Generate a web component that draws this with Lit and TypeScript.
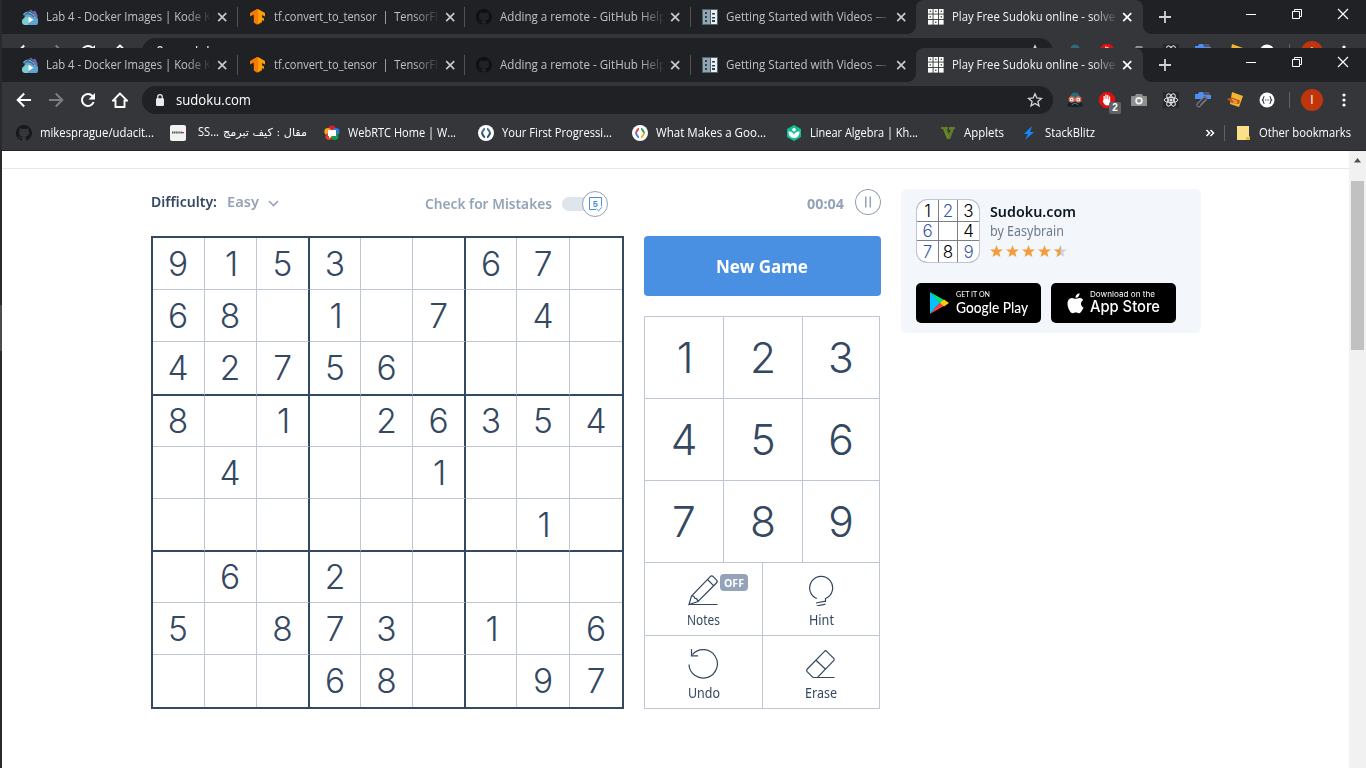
import { LitElement, html, css, svg, nothing } from "lit";
import { customElement, property } from "lit/decorators.js";
import { styleMap } from "lit/directives/style-map.js";
import { classMap } from "lit/directives/class-map.js";

const icon = (body: unknown, size = 16, box = "0 0 16 16") =>
  html`<svg width=${size} height=${size} viewBox=${box} fill="none">${body}</svg>`;

const github = (color: string) => icon(svg`<path fill=${color} d="M8 0a8 8 0 0 0-2.6 15.6c.4.1.6-.2.6-.4v-1.6c-2.2.5-2.7-.9-2.7-.9-.4-.9-.9-1.2-.9-1.2-.7-.5.1-.5.1-.5.8.1 1.200.8 1.200.8.7 1.300 1.900.9 2.400.7.1-.5.3-.9.5-1.100-1.800-.2-3.600-.9-3.600-4 0-.9.3-1.600.8-2.100-.1-.2-.4-1 .1-2.100 0 0 .7-.2 2.200.8a7.500 7.500 0 0 1 4 0c1.500-1 2.200-.8 2.200-.8.4 1.100.2 1.900.1 2.100.5.6.8 1.300.8 2.100 0 3.100-1.900 3.700-3.700 4 .3.300.6.800.6 1.500v2.200c0 .2.100.5.600.4A8 8 0 0 0 8 0z"/>`);

const favDocker = icon(svg`<path fill="#6f6aa8" d="M5 3.500L9 .5l2 2 2-1 2.500 4.500v4H4z"/><path fill="#5fa3cf" d="M1 5.500c2-3 5-3.500 8-2.500l4 4 3 3v4l-1 2H3L0 14v-3l3-3z"/><path fill="#7ccbd0" d="M0 11.500l4-4 3 2-1 6.500H2l-2-2z"/><path stroke="#24384f" stroke-width=".7" d="M1.500 7l3.500-2.500 4 1 3 2.500M5 3.500l3-1.500 3 2.500"/><path fill="#fff" d="M6.500 7.500v6.500l5-3.200z"/>`);
const favTf = icon(svg`<path fill="#f57c00" d="M7 0L0 4v3.600l3.800-2V13.500L7 15.500z"/><path fill="#ff9d00" d="M8 0l7 4v3.600l-3-1.700v2.300l2 1.200v2.600l-2-1.100V13l-4 2.500z"/><path fill="#f57c00" d="M6.500 .3L8 0v15.500l-1.500-.2z"/>`);
const favVideos = icon(svg`<path fill="#53636e" d="M0 0h16v16H0z"/><path fill="#8fa6b5" d="M1 1h7v14H1z"/><path fill="#e8eef2" d="M9 1h6v14H9z"/><path fill="#33434e" d="M3 3h2v2H3zM3 7h2v2H3zM3 11h2v2H3zM10 4h3v1.500h-3zM10 8h3v1.500h-3zM10 11h3v2h-3z"/>`);
const favSudoku = icon(svg`${[0, 5.5, 11].map((y, r) => [0, 5.5, 11].map((x, c) => svg`<rect x=${x} y=${y} width="4.600" height="4.600" fill="#fff"/>${(r === 0 && c !== 2) || (r === 0 && c === 2) || (r === 1 && c !== 1) || (r === 2 && c === 1) ? svg`<rect x=${x + 1.6} y=${y + 1.6} width="1.400" height="1.400" fill="#4b4c50"/>` : nothing}`))}`);

interface Tab { title: string; fit: number; width: number; icon: unknown; active?: boolean; }
const tabs: Tab[] = [
  { title: "Lab 4 - Docker Images | Kode K", fit: 165, width: 228, icon: favDocker },
  { title: "tf.convert_to_tensor  |  TensorFl", fit: 164, width: 227, icon: favTf },
  { title: "Adding a remote - GitHub Help", fit: 166, width: 226, icon: github("#120f10") },
  { title: "Getting Started with Videos —", fit: 161, width: 225, icon: favVideos },
  { title: "Play Free Sudoku online - solve", fit: 163, width: 227, icon: favSudoku, active: true },
];

const extensions = [
  svg`<path fill="#2b6b7e" d="M3 7c0-4 2-6.500 5-6.500S13 3 13 7l1 5H2z"/><path fill="#14212b" d="M2 10h12l2 4-4 1H4l-4-1z"/><circle cx="4.700" cy="7.500" r="2.500" fill="#fff" stroke="#e0694a" stroke-width="1.300"/><circle cx="11.300" cy="7.500" r="2.500" fill="#fff" stroke="#e0694a" stroke-width="1.300"/><path fill="#3a4a55" d="M4.200 7h1.200v1.200H4.200zM10.700 7h1.200v1.200h-1.200z"/><path stroke="#4b7a8c" d="M5 13.500l1.500-2h3l1.500 2"/>`,
  svg`<path fill="#e0100f" d="M5 0h6l5 5v6l-5 5H5l-5-5V5z"/><path fill="#fff" d="M4.500 8V4h1.300v3h.5V2.500h1.300V7h.5V3h1.300v4.500h.5V4.500h1.300v6c0 2-1 3-3 3s-3-1-4.500-4.500z"/>`,
  svg`<path fill="#8f8f8f" d="M5 2h6l1 2h3a1 1 0 0 1 1 1v9H0V5a1 1 0 0 1 1-1h3z"/><circle cx="8" cy="8.700" r="2.900" stroke="#f2f2f2" stroke-width="1.700"/>`,
  svg`<path fill="#26282c" d="M0 0h16v16H0z"/><circle cx="8" cy="8" r="1.500" fill="#e6e6e6"/><g stroke="#e6e6e6"><ellipse cx="8" cy="8" rx="6.800" ry="2.600"/><ellipse cx="8" cy="8" rx="6.800" ry="2.600" transform="rotate(60 8 8)"/><ellipse cx="8" cy="8" rx="6.800" ry="2.600" transform="rotate(120 8 8)"/></g>`,
  svg`<path fill="#4d8df6" d="M0 2h3l1-2h4l1 2v5H0z"/><path fill="#56585d" d="M9 0h5l1 3v1H9z"/><path fill="#4d8df6" d="M9 3h7v4H9z"/><path stroke="#35363a" stroke-width="3.500" d="M11 5l-7 8"/><path stroke="#777b80" stroke-width="1.100" d="M11.500 7.500l-6.300 6.700a1.900 1.900 0 0 1-2.700-2.700l6-6a1.500 1.500 0 0 1 2.200 2.200l-5.200 5.300"/>`,
  svg`<path fill="#f3b42e" d="M5 0l11 4-4 11-9-3z"/><path fill="#c4571c" d="M0 7l5-1.500 8 3-1 3.500-7-1z"/><path stroke="#f5c04d" d="M5 7.500l5 2M6 10l4 .5M11 6l-3-1"/>`,
  svg`<circle cx="8" cy="8" r="7.500" fill="#fff"/><path stroke="#44464a" stroke-width="1.200" d="M5.500 4.500c-1.500 0-1 1.500-1.200 2.500L3.300 8l1 1c.2 1-.3 2.500 1.200 2.500M10.500 4.500c1.500 0 1 1.500 1.200 2.500l1 1-1 1c-.2 1 .3 2.500-1.200 2.500"/><path fill="#44464a" d="M6 7.500h1v1H6zM7.600 7.500h1v1h-1zM9.200 7.500h1v1h-1z"/>`,
];

const codeRing = (a: string, b: string, c: string, d: string) => icon(svg`<circle cx="8" cy="8" r="8" fill="#fff"/><g stroke-width="2"><path stroke=${a} d="M7 3.800C5 4 5.300 6.500 3.500 8"/><path stroke=${b} d="M3.500 8C5.300 9.500 5 12 7 12.200"/><path stroke=${c} d="M9 3.800c2 .2 1.700 2.700 3.500 4.200"/><path stroke=${d} d="M12.500 8c-1.800 1.500-1.500 4-3.500 4.200"/></g>`);

interface Bookmark { title: string; arabic?: string; fit: number; pad: number; gap: number; icon: unknown; }
const bookmarks: Bookmark[] = [
  { title: "mikesprague/udacit...", fit: 114, pad: 14, gap: 8, icon: github("#17181a") },
  { title: "SS...", arabic: "مقال : كيف تبرمج", fit: 21, pad: 16, gap: 12, icon: icon(svg`<rect width="16" height="16" rx="2" fill="#f2f2f2"/><path stroke="#555" stroke-width="1.800" stroke-dasharray="1.300 .5" d="M2 7.500h10"/><path stroke="#c33" stroke-width="1.400" d="M12 7.600h2"/>`) },
  { title: "WebRTC Home | W...", fit: 108, pad: 17, gap: 8, icon: icon(svg`<circle cx="8" cy="4" r="3.600" fill="#d8202a"/><circle cx="3.800" cy="6.500" r="3.500" fill="#f7a521"/><circle cx="12" cy="6.500" r="3.500" fill="#2a7fd4"/><circle cx="5" cy="11.500" r="3.500" fill="#d5471f"/><circle cx="10.800" cy="11.500" r="3.500" fill="#169b48"/><path fill="#fff" d="M4 5h8v6H8l-3 2.500V11H4z"/>`) },
  { title: "Your First Progressi...", fit: 110, pad: 22, gap: 8, icon: codeRing("#4a7388", "#2f5568", "#4a7388", "#2f5568") },
  { title: "What Makes a Goo...", fit: 110, pad: 20, gap: 8, icon: codeRing("#e8453c", "#4285f4", "#2ea350", "#f2b51d") },
  { title: "Linear Algebra | Kh...", fit: 108, pad: 20, gap: 8, icon: icon(svg`<path fill="#14bf96" d="M8 0l7 4v8l-7 4-7-4V4z"/><circle cx="8" cy="4.800" r="1.800" fill="#fff"/><path fill="#fff" d="M2.500 6.500C6 6.500 8 8.500 8 10.500c0-2 2-4 5.500-4 0 4-2 6.500-5.500 6.500S2.500 10.500 2.500 6.500z"/>`) },
  { title: "Applets", fit: 40, pad: 23, gap: 7, icon: icon(svg`<path fill="#5f7f26" d="M0 2h7v2H6l2 5 1.500-4H8V2h6v2h-1L9 14H6L2 4H0z"/><path stroke="#8bb04a" stroke-width=".7" stroke-dasharray="1 1" d="M3 4l4 9"/>`) },
  { title: "StackBlitz", fit: 50, pad: 17, gap: 8, icon: icon(svg`<path fill="#1389fd" d="M11 1L3 9h4l-3 6 9-8H9z"/>`) },
];

/** One line of text, condensed or stretched to a given advance width. */
@customElement("fit-text")
class FitText extends LitElement {
  @property({ type: Number }) w = 0;
  @property() text = "";
  static styles = css`
    :host { display: inline-block; white-space: pre; flex: none; }
    .t { display: inline-block; transform-origin: 0 50%; }
  `;
  render() {
    return html`<span class="t">${this.text}</span>`;
  }
  updated() {
    const t = this.renderRoot.querySelector(".t") as HTMLElement;
    t.style.transform = "none";
    const natural = t.getBoundingClientRect().width;
    if (natural) t.style.transform = `scaleX(${this.w / natural})`;
    this.style.width = `${this.w}px`;
  }
}

@customElement("browser-chrome")
class BrowserChrome extends LitElement {
  static styles = css`
    :host { display: block; background: #35363a; color: #fff; font: 12px/16px "Open Sans", "Noto Sans", sans-serif; }
    svg { display: block; flex: none; }
    .strip { display: flex; height: 34px; background: #202124; padding-left: 8px; }
    .tab { display: flex; align-items: center; box-sizing: border-box; padding-left: 11px; position: relative; color: #bdc1c6; flex: none; }
    .tab.wide { padding-left: 12px; }
    .title { width: 163px; margin: 0 2px 0 8px; height: 17px; overflow: hidden; mask-image: linear-gradient(90deg, #000 140px, transparent 166px); }
    .tab.wide .title { margin: 0 3px 0 7.500px; }
    .tab svg.x { stroke: #c6c9cd; }
    .tab.sep::after { content: ""; position: absolute; right: 0; top: 7px; height: 20px; width: 1px; background: #505256; }
    .tab.active { background: #35363a; color: #f1f3f4; border-radius: 8px 8px 0 0; padding-left: 12px; }
    .tab.active svg.x { stroke: #fff; }
    .tab.active::before, .tab.active::after { content: ""; position: absolute; bottom: 0; width: 8px; height: 8px; }
    .tab.active::before { left: -8px; background: radial-gradient(circle at 0 0, #202124 7.5px, #35363a 8px); }
    .tab.active::after { right: -8px; background: radial-gradient(circle at 100% 0, #202124 7.5px, #35363a 8px); }
    .plus { margin: 9px 0 0 14px; }
    .win { display: flex; margin: 6px 15px 0 auto; gap: 30px; }
    .bar { display: flex; align-items: center; height: 36px; padding-left: 14px; }
    .bar > svg { margin-right: 16px; }
    .bar > svg:last-child { margin-right: 0; }
    .omni { display: flex; align-items: center; flex: none; width: 911px; height: 28px; border-radius: 14px; background: #202124; margin-left: -2px; box-sizing: border-box; padding: 0 10px 0 10px; font-size: 14px; color: #fff; }
    .omni fit-text { margin: 0 auto 0 8px; }
    .ext { display: flex; gap: 16px; margin-left: 14px; flex: none; }
    .slot { position: relative; }
    .count { position: absolute; left: 10px; top: 10px; width: 12px; height: 12px; border-radius: 2px; background: #606267; font: bold 10px/12px "Liberation Sans", sans-serif; text-align: center; }
    .rule { width: 1px; height: 16px; background: #606266; margin: 0 11px 0 14px; flex: none; }
    .avatar { width: 22px; height: 22px; border-radius: 50%; background: #bf360c; font: 12px/22px "Open Sans", sans-serif; text-align: center; margin-right: 13px; flex: none; }
    .marks { display: flex; align-items: center; height: 32px; margin-top: -1px; }
    .mark { display: flex; align-items: center; flex: none; }
    .mark > div, .end fit-text { margin-top: -1px; }
    .arabic { font-family: "DejaVu Sans", sans-serif; font-size: 11px; margin-left: 4px; }
    .end { display: flex; align-items: center; margin-left: auto; padding-right: 15px; }
    .end .rule { margin: 0 12px 0 6px; }
    .end fit-text { margin-left: 9px; }
  `;
  render() {
    return html`
      <div class="strip">
        ${tabs.map((t, i) => html`
          <div class=${classMap({ tab: true, active: !!t.active, sep: i < 3, wide: i < 2 })} style=${styleMap({ width: `${t.width}px` })}>
            ${t.icon}
            <div class="title"><fit-text .w=${t.fit} .text=${t.title}></fit-text></div>
            <svg class="x" width="18" height="16" viewBox="0 0 18 16" stroke-width="1.700"><path d="M6.200 4.200l8 8M14.200 4.200l-8 8"/></svg>
          </div>`)}
        <svg class="plus" width="16" height="16" viewBox="0 0 16 16"><path stroke="#d0d2d5" stroke-width="1.800" d="M8 2v12M2 8h12"/></svg>
        <div class="win">
          ${icon(svg`<path stroke="#fff" d="M3 8.500h10"/>`)}
          ${icon(svg`<path stroke="#fff" d="M3.500 5.500h7v7h-7zM5.500 5.500v-2h7v7h-2"/>`)}
          ${icon(svg`<path stroke="#fff" stroke-width="1.200" d="M3 3l10 10M13 3L3 13"/>`)}
        </div>
      </div>
      <div class="bar">
        ${icon(svg`<path stroke="#fff" stroke-width="2" d="M15 8H2M8.200 1.500L1.700 8l6.500 6.500"/>`)}
        ${icon(svg`<path stroke="#7d7e82" stroke-width="2" d="M1 8h13M7.800 1.500L14.300 8l-6.500 6.500"/>`)}
        ${icon(svg`<path stroke="#fff" stroke-width="2" d="M13.600 10A6 6 0 1 1 12.500 4"/><path fill="#fff" d="M15 1v6.500H8.500z"/>`)}
        ${icon(svg`<path stroke="#fff" stroke-width="1.900" d="M8 1.500L1 8.500h2.500V15h9V8.500H15z"/>`)}
        <div class="omni">
          ${icon(svg`<rect x="4" y="6.300" width="8" height="7.700" rx="1" fill="#e8eaed"/><path stroke="#e8eaed" stroke-width="1.300" d="M5.800 7V4.800a2.200 2.200 0 0 1 4.400 0V7"/>`)}
          <fit-text .w=${75} text="sudoku.com"></fit-text>
          ${icon(svg`<path stroke="#d5d7da" stroke-width="1.300" d="M8 1.800l1.800 4.200 4.700.4-3.600 3 1.100 4.500L8 11.500l-4 2.400 1.100-4.500-3.600-3 4.700-.4z"/>`)}
        </div>
        <div class="ext">
          ${extensions.map((e, i) => html`<div class="slot">${icon(e)}${i === 1 ? html`<div class="count">2</div>` : nothing}</div>`)}
        </div>
        <div class="rule"></div>
        <div class="avatar">I</div>
        ${icon(svg`<g fill="#fff"><circle cx="8" cy="3" r="1.600"/><circle cx="8" cy="8" r="1.600"/><circle cx="8" cy="13" r="1.600"/></g>`)}
      </div>
      <div class="marks">
        ${bookmarks.map((b) => html`
          <div class="mark" style=${styleMap({ paddingLeft: `${b.pad}px`, gap: `${b.gap}px` })}>
            ${b.icon}
            <div><fit-text .w=${b.fit} .text=${b.title}></fit-text>${b.arabic ? html`<fit-text class="arabic" dir="ltr" .w=${84} .text=${b.arabic}></fit-text>` : nothing}</div>
          </div>`)}
        <div class="end">
          ${icon(svg`<path stroke="#fff" stroke-width="1.500" d="M4.500 5l3 3-3 3M8.500 5l3 3-3 3"/>`, 16)}
          <div class="rule"></div>
          <svg width="13" height="14" viewBox="0 0 13 14"><path fill="#fbe08a" d="M0 0h12v10l1 1v3H0z"/><path fill="#e8bd45" d="M9 14v-3h4v3z"/></svg>
          <fit-text .w=${92} text="Other bookmarks"></fit-text>
        </div>
      </div>
    `;
  }
}

const puzzle = ["9153__67_", "68_1_7_4_", "42756____", "8_1_26354", "_4___1___", "_______1_", "_6_2_____", "5_873_1_6", "___68__97"];

@customElement("sudoku-board")
class SudokuBoard extends LitElement {
  static styles = css`
    :host { display: block; }
    .board {
      display: grid; border: 2px solid #344861; width: 469px; height: 469px;
      grid-template-columns: 52px 52px 53px 51px 52px 53px 51px 53px 52px;
      grid-template-rows: 52px 52px 54px 51px 52px 53px 51px 52px 52px;
    }
    .cell {
      display: flex; align-items: center; justify-content: center; box-sizing: border-box;
      border: 0 solid #bec6d4; border-width: 0 1px 1px 0;
      font: 300 33.500px/40px Inter, sans-serif; color: #344861; min-width: 0; min-height: 0;
    }
    .one { padding-left: 2px; }
    .first { padding-right: 1px; }
    .right { border-right: 2px solid #344861; }
    .bottom { border-bottom: 2px solid #344861; }
    .lastcol { border-right: 0; }
    .lastrow { border-bottom: 0; }
  `;
  render() {
    return html`<div class="board">
      ${puzzle.map((row, r) => [...row].map((d, c) => html`<div class=${classMap({
        cell: true, one: d === "1", first: c < 2 && d !== "1", right: c === 2 || c === 5, bottom: r === 2 || r === 5, lastcol: c === 8, lastrow: r === 8,
      })}>${d === "_" ? nothing : d}</div>`))}
    </div>`;
  }
}

@customElement("game-controls")
class GameControls extends LitElement {
  static styles = css`
    :host { display: block; color: #344861; font: 14px/18px "Noto Sans", sans-serif; }
    svg { display: block; }
    .new { width: 237px; height: 60px; box-sizing: border-box; padding-right: 2px; border-radius: 4px; background: #4a90e2; color: #fff; font: 700 18px/24px "Noto Sans", sans-serif; display: flex; justify-content: center; align-items: center; margin-bottom: 20px; }
    .pad { width: 234px; border: 1px solid #bec6d4; }
    .keys { display: grid; grid-template-columns: 79px 79px 76px; grid-auto-rows: 82px; }
    .key { display: flex; align-items: center; justify-content: center; border: 0 solid #bec6d4; border-width: 0 1px 1px 0; font: 300 42.500px/50px Inter, sans-serif; padding-top: 1px; }
    .key.one { padding-left: 2px; }
    .key.last { border-right: 0; }
    .tools { display: grid; grid-template-columns: 118px 116px; grid-template-rows: 73px 72px; }
    .tool { position: relative; box-sizing: border-box; display: flex; flex-direction: column; align-items: center; padding-top: 11px; }
    .name { margin-top: 5px; }
    .left { border-right: 1px solid #bec6d4; }
    .top { border-bottom: 1px solid #bec6d4; }
    .off { position: absolute; left: 75px; top: 11px; width: 28px; height: 17px; border-radius: 4px; background: #94a3b7; color: #fff; font: 700 11px/17px "Noto Sans", sans-serif; text-align: center; }
  `;
  render() {
    const line = (b: unknown) => html`<svg width="32" height="32" viewBox="0 0 32 32" fill="none" stroke="#344861" stroke-width="1.200">${b}</svg>`;
    return html`
      <div class="new"><fit-text .w=${92} text="New Game"></fit-text></div>
      <div class="pad">
        <div class="keys">${[1, 2, 3, 4, 5, 6, 7, 8, 9].map((n) => html`<div class=${classMap({ key: true, one: n === 1, last: n % 3 === 0 })}>${n}</div>`)}</div>
        <div class="tools">
          <div class="tool left top">${line(svg`<path d="M1 30.500L3.500 22 22 2.800c1-1 2.400-1 3.400 0l3 3c.9.9.9 2.300 0 3.200L10 27.500zM19.500 5.500l6.300 6.300M3.500 22c1.500-.3 3 .5 3.200 2.200 1.800.2 2.900 1.500 3.300 3.300M1 30.500H29.500"/>`)}<fit-text class="name" .w=${33} text="Notes"></fit-text><div class="off"><fit-text .w=${20} text="OFF"></fit-text></div></div>
          <div class="tool top">${line(svg`<path d="M11.800 24.500A11.500 11.500 0 1 1 20.500 24.500V28M11 29l9.500-1.800M11.500 32l9-1.800"/>`)}<fit-text class="name" .w=${25} text="Hint"></fit-text></div>
          <div class="tool left">${line(svg`<path d="M1 17.500A14.200 14.200 0 1 0 4.500 7.500M3.500 2v6.800H10"/>`)}<fit-text class="name" .w=${32} text="Undo"></fit-text></div>
          <div class="tool">${line(svg`<path d="M2.300 22L19.500 4.300c.7-.7 1.500-.7 2.200 0l7 7c.7.700.7 1.700 0 2.400L12.500 30.500H8l-5.700-5.700c-.8-.8-.8-2 0-2.800zM11 13.200l9.800 9.300M8 30.500h21.500"/>`)}<fit-text class="name" .w=${32} text="Erase"></fit-text></div>
        </div>
      </div>
    `;
  }
}

@customElement("promo-card")
class PromoCard extends LitElement {
  static styles = css`
    :host { display: block; box-sizing: border-box; width: 300px; height: 144px; padding: 10px 15px; background: #f3f6fb; border-radius: 6px; font-family: "Noto Sans", sans-serif; }
    svg { display: block; }
    .app { display: flex; gap: 10px; }
    .logo { width: 62px; height: 62px; border: 1px solid #bec6d4; border-radius: 11px; background: #7b8088; display: grid; grid-template-columns: 21px 18px 21px; grid-template-rows: 21px 18px 21px; gap: 1px; overflow: hidden; }
    .logo div { background: #fff; font: 300 17px/20px Inter, sans-serif; display: flex; align-items: center; justify-content: center; color: #000; }
    .logo .blue { color: #3556a8; }
    .name { font-weight: 600; font-size: 15px; line-height: 20px; color: #0c1622; margin: 2px 0 0 -.5px; }
    .by { font-size: 14px; line-height: 20px; color: #6e7c8c; margin-left: -.5px; }
    .stars { display: flex; gap: 3px; margin-top: 4px; }
    .stores { display: flex; gap: 10px; margin-top: 20px; }
    .store { box-sizing: border-box; width: 125px; height: 40px; border-radius: 5px; background: #000; color: #fff; display: flex; align-items: center; }
    .google { padding-left: 13px; gap: 6px; font-family: Lato, sans-serif; }
    .apple { padding-left: 16px; gap: 6px; font-family: Inter, sans-serif; }
    .label { display: flex; flex-direction: column; }
    .small { font-size: 8px; line-height: 9px; margin-top: -2px; }
    .big { font-size: 16px; line-height: 15px; font-weight: 500; }
    .google .small { margin-top: -3px; }
    .google .big { font-weight: 500; }
  `;
  render() {
    const star = (fill: string) => svg`<path fill=${fill} d="M6.500 0l1.600 4.500 4.900.1-3.900 2.900 1.400 4.600-4-2.700-4 2.700 1.400-4.600L0 4.600l4.900-.1z"/>`;
    return html`
      <div class="app">
        <div class="logo">${["1", "2", "3", "6", "", "4", "7", "8", "9"].map((d) => html`<div class=${classMap({ blue: "2679".includes(d || "x") })}>${d}</div>`)}</div>
        <div>
          <div class="name"><fit-text .w=${86} text="Sudoku.com"></fit-text></div>
          <div class="by"><fit-text .w=${74} text="by Easybrain"></fit-text></div>
          <div class="stars">
            ${[0, 1, 2, 3].map(() => html`<svg width="13" height="13" viewBox="0 0 13 13">${star("#f59b38")}</svg>`)}
            <svg width="13" height="13" viewBox="0 0 13 13">${star("#ccd3de")}<path fill="#f59b38" d="M6.500 0v9.400l-4 2.700 1.400-4.600L0 4.600l4.900-.1z"/></svg>
          </div>
        </div>
      </div>
      <div class="stores">
        <div class="store google">
          <svg width="21" height="24" viewBox="0 0 21 24"><path fill="#00c3ff" d="M1 1v22l10-11z"/><path fill="#00e676" d="M1 1l14 8-4 3.500z"/><path fill="#ff3a44" d="M1 23l14-8-4-3.500z"/><path fill="#ffce00" d="M15 8.500l5 3.500-5 3.500-4-3.500z"/></svg>
          <div class="label"><fit-text class="small" .w=${34} text="GET IT ON"></fit-text><fit-text class="big" .w=${72} text="Google Play"></fit-text></div>
        </div>
        <div class="store apple">
          <svg width="17" height="21" viewBox="0 0 17 21"><path fill="#fff" d="M14 11c0-2.100 1-3.200 2.300-4.100-1.300-1.700-2.700-2-4-2-1.600 0-2.600.9-3.700.9S6.300 4.900 4.900 5C1.900 5.200.5 7.900.5 10.700c0 4.200 3 9.600 5.300 9.600 1 0 1.600-.7 3-.7s1.900.7 3 .7c2 0 3.900-3.600 4.700-5.800C15 13.800 14 12.600 14 11zM11.500 3.400c.7-.8 1.100-1.900 1-3.200-1.100.1-2.200.7-2.900 1.500-.7.8-1.200 1.800-1 3 1.200.1 2.200-.5 2.900-1.300z"/></svg>
          <div class="label"><fit-text class="small" .w=${65} text="Download on the"></fit-text><fit-text class="big" .w=${70} text="App Store"></fit-text></div>
        </div>
      </div>
    `;
  }
}

@customElement("app-root")
class AppRoot extends LitElement {
  static styles = css`
    :host { display: block; width: 1366px; height: 768px; overflow: hidden; font-family: "Noto Sans", sans-serif; }
    svg { display: block; flex: none; }
    .desktop { display: flex; height: 768px; }
    .edge { width: 2px; background: #2a2a2b; display: flex; flex-direction: column; padding-top: 305px; box-sizing: border-box; }
    .edge div { height: 46px; background: #4b4b4c; }
    .window { width: 1364px; background: #fff; display: flex; flex-direction: column; }
    .back { height: 48px; overflow: hidden; flex: none; }
    .front { height: 102px; overflow: hidden; border-bottom: 1px solid #232326; flex: none; background: #35363a; }
    .view { flex: 1; display: flex; min-height: 0; }
    .page { width: 1347px; }
    .header { height: 17px; border-bottom: 1px solid #e3e9f1; }
    .scroll { width: 17px; background: #f1f1f1; box-sizing: border-box; padding: 7px 2px 0; }
    .thumb { height: 169px; background: #c1c1c1; margin-top: 18px; }
    .content { display: flex; padding: 20px 0 0 149px; align-items: flex-start; }
    .game { width: 730px; }
    .info { display: flex; align-items: center; height: 28px; color: #94a3b7; font-size: 15px; font-weight: 600; line-height: 20px; margin-bottom: 19px; }
    .dark { color: #344861; margin: -4px 10px 0 0; }
    .easy { margin-top: -4px; }
    .chev { margin: 0 145px 0 9px; }
    .check { margin-top: -1px; }
    .toggle { position: relative; width: 34px; height: 14px; border-radius: 7px; background: #dfe5ed; margin: 1px 0 0 10px; }
    .knob { position: absolute; left: 20px; top: -6px; width: 24px; height: 24px; border: 1px solid #94a3b7; border-radius: 50%; background: #fff; display: grid; place-items: center; }
    .time { margin: -1px 11px 0 212px; font-weight: 700; }
    .pause { margin-top: -3px; }
    .play { display: flex; gap: 20px; }
    promo-card { margin-left: 20px; }
  `;
  render() {
    return html`
      <div class="desktop">
        <div class="edge"><div></div></div>
        <div class="window">
          <div class="back"><browser-chrome></browser-chrome></div>
          <div class="front"><browser-chrome></browser-chrome></div>
          <div class="view">
            <div class="page">
              <div class="header"></div>
              <div class="content">
                <div class="game">
                  <div class="info">
                    <fit-text class="dark" .w=${66} text="Difficulty:"></fit-text>
                    <fit-text class="easy" .w=${32} text="Easy"></fit-text>
                    <svg class="chev" width="12" height="12" viewBox="0 0 12 12" fill="none" stroke="#94a3b7" stroke-width="1.600"><path d="M1 4l4.500 4.500L10 4"/></svg>
                    <fit-text class="check" .w=${127} text="Check for Mistakes"></fit-text>
                    <div class="toggle"><div class="knob"><svg width="16" height="16" viewBox="0 0 16 16" fill="none" stroke="#4a90e2"><path d="M9 13.500H2.500v-12h12V10M9.500 13l2 1.800 3.500-3.600"/><text x="5.800" y="11" fill="#4a90e2" stroke="none" font-weight="700" font-size="9" font-family="Liberation Sans, sans-serif">5</text></svg></div></div>
                    <fit-text class="time" .w=${37} text="00:04"></fit-text>
                    <svg class="pause" width="26" height="26" viewBox="0 0 26 26" fill="none" stroke="#94a3b7"><circle cx="13" cy="13" r="12.500" stroke-width="1.100"/><path stroke-width="1.500" d="M10.800 7.500v11M15.300 7.500v11"/></svg>
                  </div>
                  <div class="play"><sudoku-board></sudoku-board><game-controls></game-controls></div>
                </div>
                <promo-card></promo-card>
              </div>
            </div>
            <div class="scroll">
              <svg width="13" height="5" viewBox="0 0 13 5"><path fill="#505050" d="M6.500 0L10 4.500H3z"/></svg>
              <div class="thumb"></div>
            </div>
          </div>
        </div>
      </div>
    `;
  }
}
